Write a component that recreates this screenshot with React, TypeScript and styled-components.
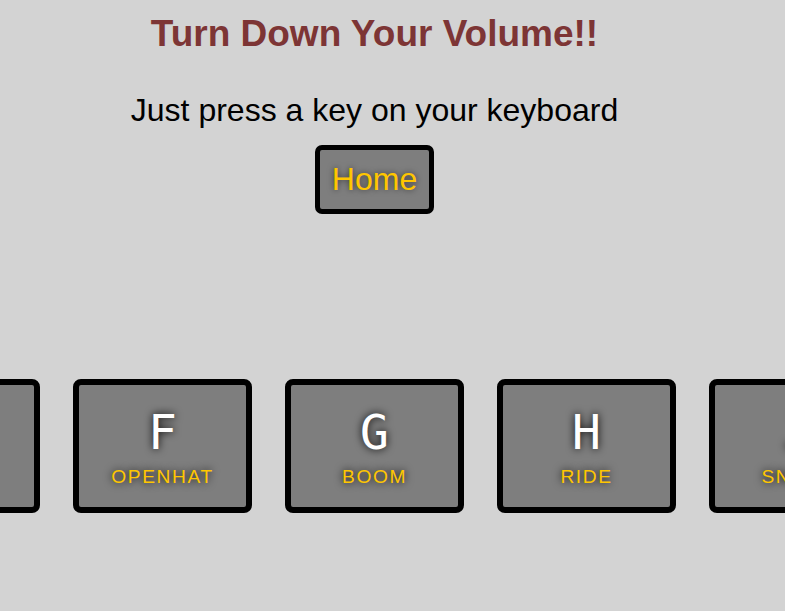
import React from "react";
import styled, { createGlobalStyle } from "styled-components";

const GlobalStyle = createGlobalStyle`
  html, body {
    margin: 0;
    padding: 0;
    background: #d3d3d3;
    overflow: hidden;
  }
  body {
    font-family: "Liberation Sans", Arial, sans-serif;
  }
`;

const Page = styled.div`
  width: 749px;
  height: 611px;
  display: flex;
  flex-direction: column;
  align-items: center;
`;

const Title = styled.h1`
  margin: 13px 0 0;
  font-size: 37px;
  line-height: 42px;
  font-weight: bold;
  color: #7d3535;
  text-align: center;
`;

const Hint = styled.p`
  margin: 37px 0 0;
  font-size: 32px;
  line-height: 37px;
  color: #000;
  text-align: center;
`;

const HomeButton = styled.button`
  margin-top: 16px;
  box-sizing: border-box;
  width: 119px;
  height: 69px;
  border: 5px solid #000;
  border-radius: 7px;
  background: rgba(0, 0, 0, 0.4);
  color: #ffc600;
  font-family: "Liberation Sans", Arial, sans-serif;
  font-size: 32px;
  line-height: 37px;
  padding: 0;
  text-shadow: 0 0 6px rgba(0, 0, 0, 0.6);
  cursor: pointer;
`;

const Keys = styled.div`
  margin-top: 165px;
  width: 100%;
  display: flex;
  justify-content: center;
  gap: 33px;
`;

const Key = styled.div`
  flex: 0 0 auto;
  box-sizing: border-box;
  width: 179px;
  height: 134px;
  border: 6px solid #000;
  border-radius: 8px;
  background: rgba(0, 0, 0, 0.4);
  text-align: center;
  padding-top: 20px;
  text-shadow: 0 0 8px #000;
`;

const Letter = styled.kbd`
  display: block;
  font-family: "DejaVu Sans Mono", "Liberation Mono", monospace;
  font-size: 48px;
  line-height: 55px;
  color: #fff;
`;

const Sound = styled.span`
  display: block;
  margin-top: 6px;
  font-size: 19.2px;
  line-height: 22px;
  letter-spacing: 1.6px;
  text-transform: uppercase;
  color: #ffc600;
`;

const drums = [
  { key: "A", sound: "clap" },
  { key: "S", sound: "hihat" },
  { key: "D", sound: "kick" },
  { key: "F", sound: "openhat" },
  { key: "G", sound: "boom" },
  { key: "H", sound: "ride" },
  { key: "J", sound: "snare" },
  { key: "K", sound: "tom" },
  { key: "L", sound: "tink" },
];

export default function App() {
  return (
    <>
      <GlobalStyle />
      <Page>
        <Title>Turn Down Your Volume!!</Title>
        <Hint>Just press a key on your keyboard</Hint>
        <HomeButton>Home</HomeButton>
        <Keys>
          {drums.map((d) => (
            <Key key={d.key}>
              <Letter>{d.key}</Letter>
              <Sound>{d.sound}</Sound>
            </Key>
          ))}
        </Keys>
      </Page>
    </>
  );
}
